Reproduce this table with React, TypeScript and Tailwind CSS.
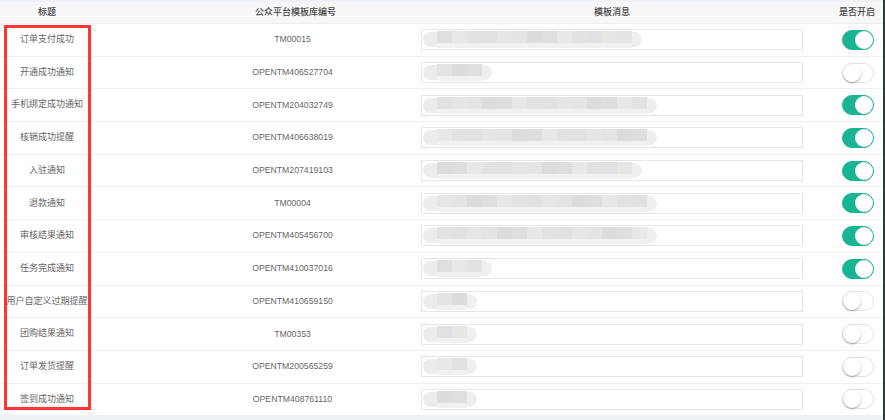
import React from "react";

const shades = [
  "bg-[#dedede]",
  "bg-[#e4e4e4]",
  "bg-[#e0e1e3]",
  "bg-[#e8e8e8]",
  "bg-[#dcdcdc]",
  "bg-[#e6e6e4]",
  "bg-[#e2e2e4]",
];

const rows = [
  { title: "订单支付成功", code: "TM00015", cells: 13, on: true },
  { title: "开通成功通知", code: "OPENTM406527704", cells: 3, on: false },
  { title: "手机绑定成功通知", code: "OPENTM204032749", cells: 14, on: true },
  { title: "核销成功提醒", code: "OPENTM406638019", cells: 14, on: true },
  { title: "入驻通知", code: "OPENTM207419103", cells: 13, on: true },
  { title: "退款通知", code: "TM00004", cells: 14, on: true },
  { title: "审核结果通知", code: "OPENTM405456700", cells: 14, on: true },
  { title: "任务完成通知", code: "OPENTM410037016", cells: 3, on: true },
  { title: "用户自定义过期提醒", code: "OPENTM410659150", cells: 2, on: false },
  { title: "团购结果通知", code: "TM00353", cells: 2, on: false },
  { title: "订单发货提醒", code: "OPENTM200565259", cells: 2, on: false },
  { title: "签到成功通知", code: "OPENTM408761110", cells: 2, on: false },
];

function Toggle({ on }: { on: boolean }) {
  return on ? (
    <div className="w-[32px] h-[20px] rounded-full bg-[#1ab394] border border-[#1ab394] flex items-center justify-end">
      <div className="w-[18px] h-[18px] rounded-full bg-white" />
    </div>
  ) : (
    <div className="w-[32px] h-[20px] rounded-full bg-white border border-[#e3e3e3] flex items-center justify-start">
      <div className="w-[18px] h-[18px] rounded-full bg-white shadow-[0_1px_2px_rgba(0,0,0,0.35)]" />
    </div>
  );
}

function Blurred({ cells, seed }: { cells: number; seed: number }) {
  return (
    <div className="flex items-center h-full pl-[1px] blur-[0.6px]">
      <div className="w-[14px] h-[15px] rounded-l-full bg-[#ececec]" />
      {Array.from({ length: cells }).map((_, i) => (
        <div key={i} className="w-[15px] h-[17px] flex flex-col">
          <div className={`h-[12px] ${shades[(i * 3 + seed) % shades.length]}`} />
          <div className="h-[5px] bg-[#f1f1f1]" />
        </div>
      ))}
      <div className="w-[10px] h-[15px] rounded-r-full bg-[#efefef]" />
    </div>
  );
}

export default function App() {
  return (
    <div
      className="relative w-[885px] h-[420px] bg-white overflow-hidden border-r-2 border-[#2d3b37] flex flex-col text-[#666666]"
      style={{ fontFamily: '"Liberation Sans", "Noto Sans CJK SC", sans-serif' }}
    >
      <div className="h-[2px] bg-[#eef1f6]" />

      {/* Header */}
      <div className="h-[22px] bg-[#f7f7f7] grid grid-cols-[94px_327px_392px_1fr] items-center text-[9px] font-medium text-[#444] border-b border-[#eeeeee]">
        <div className="text-center">标题</div>
        <div className="text-center pl-[76px]">公众平台模板库编号</div>
        <div className="text-center pr-[10px]">模板消息</div>
        <div className="flex justify-end pr-[8px]">是否开启</div>
      </div>

      {/* Rows */}
      {rows.map((r, idx) => (
        <div
          key={r.code}
          className="h-[32.7px] shrink-0 grid grid-cols-[94px_327px_392px_1fr] items-center text-[9px] border-b border-[#f0f0f0]"
        >
          <div className="text-center whitespace-nowrap">{r.title}</div>
          <div className="text-center pl-[70px] text-[8.7px]">{r.code}</div>
          <div>
            <div className="w-[382px] h-[21px] border border-[#e6e6e6] overflow-hidden">
              <Blurred cells={r.cells} seed={idx} />
            </div>
          </div>
          <div className="flex justify-end pr-[9px]">
            <Toggle on={r.on} />
          </div>
        </div>
      ))}

      <div className="flex-1 bg-[#eef1f6]" />

      {/* annotation */}
      <div className="absolute left-[4px] top-[25px] w-[87px] h-[385px] border-[3px] border-[#ff3535]" />
    </div>
  );
}
